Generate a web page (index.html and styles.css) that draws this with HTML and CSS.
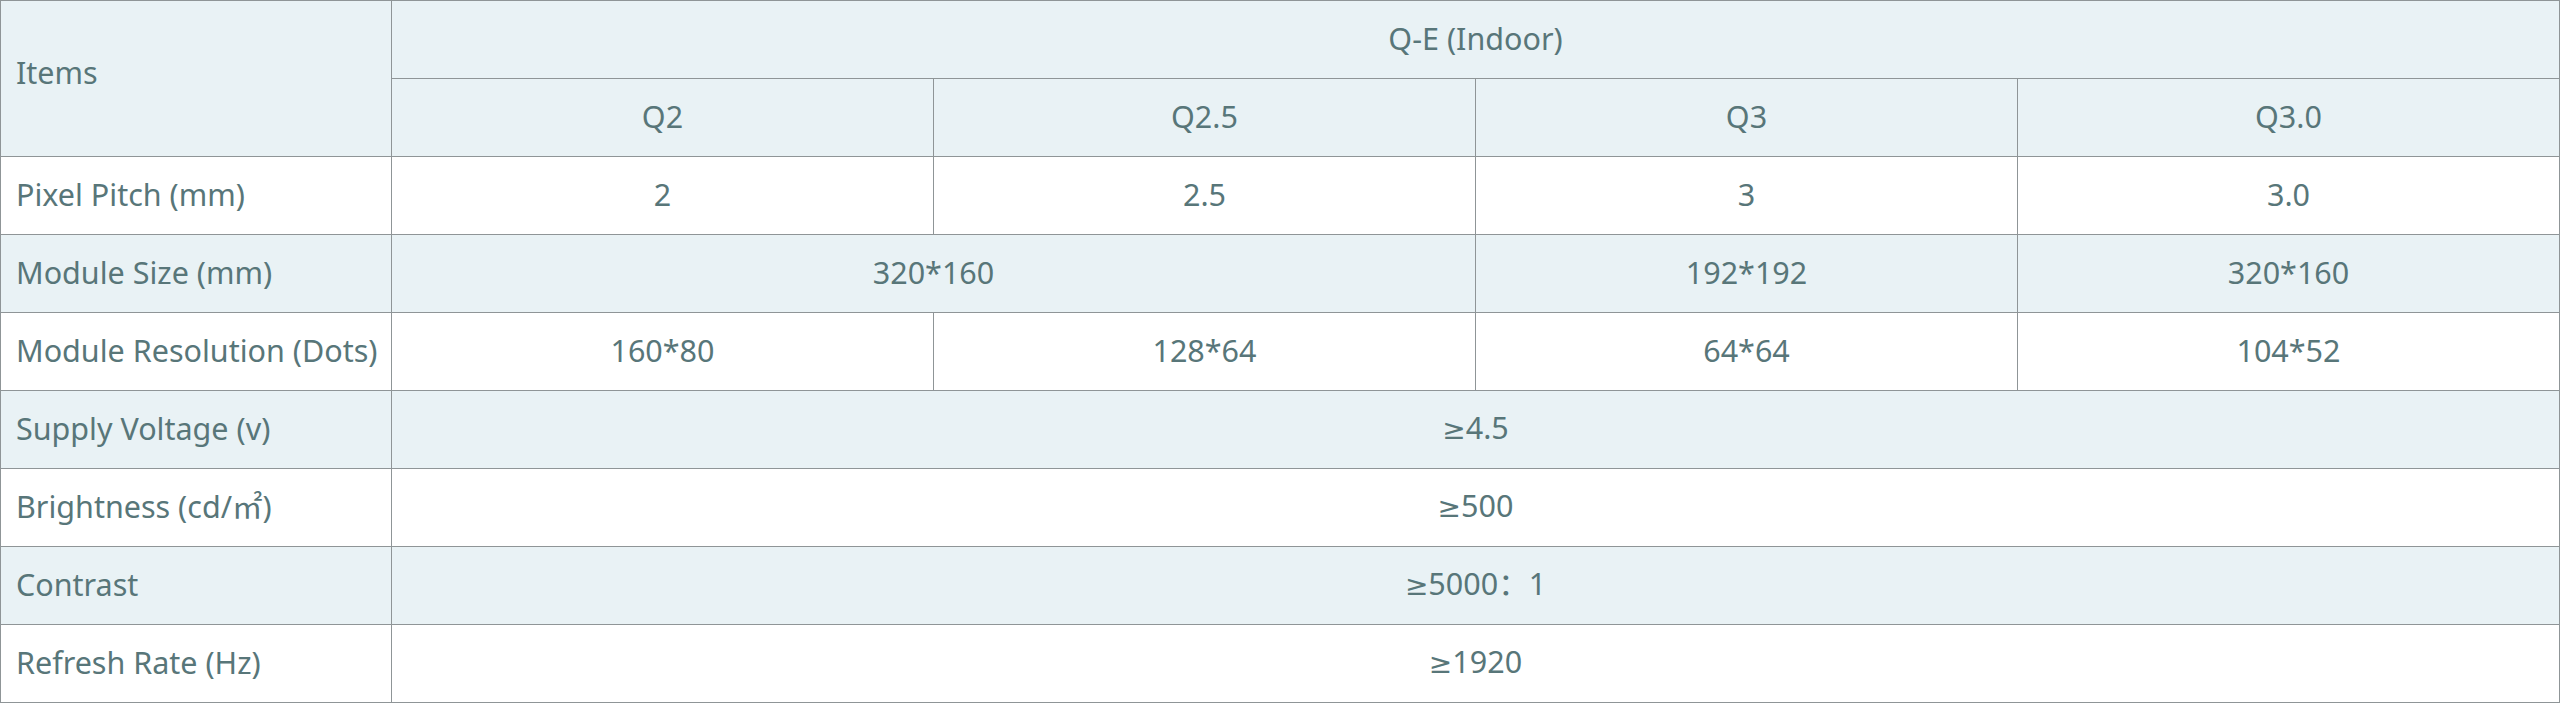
FILE: index.html
```html
<!DOCTYPE html>
<html lang="en">
<head>
<meta charset="utf-8">
<title>Q-E (Indoor)</title>
<link rel="stylesheet" href="styles.css">
</head>
<body>
<table class="spec">
  <colgroup>
    <col class="c-item">
    <col class="c-val">
    <col class="c-val">
    <col class="c-val">
    <col class="c-val">
  </colgroup>
  <tbody>
    <tr class="shade">
      <td class="label top" rowspan="2">Items</td>
      <td colspan="4">Q-E (Indoor)</td>
    </tr>
    <tr class="shade">
      <td>Q2</td>
      <td>Q2.5</td>
      <td>Q3</td>
      <td>Q3.0</td>
    </tr>
    <tr>
      <td class="label">Pixel Pitch (mm)</td>
      <td>2</td>
      <td>2.5</td>
      <td>3</td>
      <td>3.0</td>
    </tr>
    <tr class="shade">
      <td class="label">Module Size (mm)</td>
      <td colspan="2">320*160</td>
      <td>192*192</td>
      <td>320*160</td>
    </tr>
    <tr>
      <td class="label">Module Resolution (Dots)</td>
      <td>160*80</td>
      <td>128*64</td>
      <td>64*64</td>
      <td>104*52</td>
    </tr>
    <tr class="shade">
      <td class="label">Supply Voltage (v)</td>
      <td colspan="4"><span class="ge">≥</span>4.5</td>
    </tr>
    <tr>
      <td class="label">Brightness (cd/㎡)</td>
      <td colspan="4"><span class="ge">≥</span>500</td>
    </tr>
    <tr class="shade">
      <td class="label">Contrast</td>
      <td colspan="4"><span class="ge">≥</span>5000：1</td>
    </tr>
    <tr>
      <td class="label">Refresh Rate (Hz)</td>
      <td colspan="4"><span class="ge">≥</span>1920</td>
    </tr>
  </tbody>
</table>
</body>
</html>
```
FILE: styles.css
```css
html, body {
  margin: 0;
  padding: 0;
  background: #ffffff;
}

.spec {
  width: 2560px;
  border-collapse: collapse;
  table-layout: fixed;
  font-family: "Noto Sans", "Liberation Sans", "Noto Sans CJK SC", sans-serif;
  font-size: 30.5px;
  color: #587679;
}

.c-item {
  width: 391px;
}

.spec td {
  height: 74px;
  padding: 0 8px 3px;
  border: 1px solid #8f9597;
  text-align: center;
  vertical-align: middle;
  white-space: nowrap;
  line-height: 1;
}

.spec td.label {
  text-align: left;
  padding-left: 15px;
}

.spec td.top {
  padding-bottom: 12px;
}

.spec .ge {
  font-family: "DejaVu Sans", "Liberation Sans", sans-serif;
  font-size: 28px;
}

.spec tr.shade td {
  background: #e9f2f5;
}

.spec tr:not(.shade) td {
  background: #ffffff;
}
```
